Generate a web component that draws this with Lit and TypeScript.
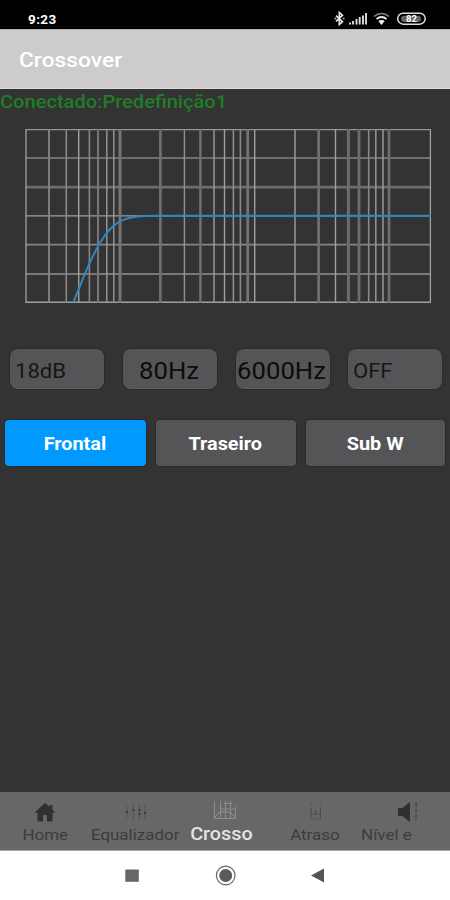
import { LitElement, html, svg, css } from "lit";
import { customElement, state } from "lit/decorators.js";

const VERTICALS: [number, number, string][] = [
  [26, 1.3, "#a0a0a0"], [49, 1.8, "#868686"], [66.3, 1.6, "#888888"], [78.7, 1.4, "#a0a0a0"],
  [89.4, 1.6, "#888888"], [98, 2.1, "#767676"], [106.8, 1.4, "#9a9a9a"], [113.8, 1.4, "#989898"],
  [120, 3, "#757575"], [160.4, 2.7, "#707070"], [184.4, 1.4, "#929292"], [200.4, 2.5, "#707070"],
  [214, 1.4, "#a0a0a0"], [224.5, 1.4, "#a0a0a0"], [233.4, 1.5, "#929292"], [240.4, 1.6, "#8a8a8a"],
  [247.7, 2.8, "#737373"], [254.7, 1.4, "#a0a0a0"], [295, 1.5, "#989898"], [318.6, 2.8, "#6e6e6e"],
  [335.5, 1.4, "#a0a0a0"], [348.4, 3, "#6c6c6c"], [359, 2.8, "#6c6c6c"], [368.7, 1.6, "#888888"],
  [375.8, 1.6, "#909090"], [383, 1.4, "#a0a0a0"], [389, 2.8, "#6e6e6e"], [430.4, 1.3, "#a0a0a0"],
];
const HORIZONTALS: [number, number, string][] = [
  [129.3, 1.3, "#959595"], [157.6, 1.6, "#858585"], [186.8, 2.7, "#6d6d6d"], [215.5, 1.3, "#a0a0a0"],
  [244.2, 1.8, "#858585"], [273.6, 1.5, "#929292"], [301.8, 1.4, "#a0a0a0"],
];

const bluetooth = svg`<path d="M1.5 4.2 8 10.3 4.8 13V1L8 3.7 1.5 9.8" fill="none" stroke="#e8e8e8" stroke-width="1.6"/><path d="M0 7h1.6M8.4 7H10" stroke="#ccc" stroke-width="1.4"/>`;

@customElement("app-root")
export class AppRoot extends LitElement {
  @state() private band = "Frontal";

  static styles = css`
    :host { display: flex; flex-direction: column; width: 450px; height: 900px; background: #333; font-family: Roboto, sans-serif; overflow: hidden; }
    svg { display: block; }
    .status { height: 28.6px; flex: none; background: #000; display: flex; justify-content: space-between; padding: 0 24px 0 28px; box-sizing: border-box; color: #fff; }
    .time { font-size: 13.5px; font-weight: 700; line-height: 38px; letter-spacing: .4px; }
    .title { height: 60px; flex: none; box-sizing: border-box; background: #cdcbcb; border-top: 1px solid #b5b5b5; border-bottom: 1px solid #dadada; padding-left: 19px; color: #fff; font-size: 21px; font-weight: 500; line-height: 61px; }
    .x { display: inline-block; transform-origin: 0 50%; white-space: nowrap; }
    .c { transform-origin: 50% 50%; }
    .title .x { transform: scaleX(1.085); }
    .connection { height: 28px; line-height: 27px; color: #1f7e25; font-size: 17.5px; font-weight: 500; flex: none; }
    .connection .x { transform: scaleX(1.147); }
    .chart { height: 200px; flex: none; }
    .fields { display: grid; grid-template-columns: repeat(4, 94px); gap: 18.6px; margin: 32px 0 0 10.4px; flex: none; }
    .field { height: 40px; box-sizing: border-box; border-radius: 8px; background: #555557; box-shadow: 0 0 0 1px #2b2b2b; border-bottom: 1px solid #536266; color: #0c0c0c; font-size: 24px; line-height: 44px; text-align: center; overflow: hidden; display: flex; justify-content: center; padding-right: 1.5px; }
    .field .x { transform: scaleX(1.07); }
    .field.left { justify-content: flex-start; padding-left: 5px; font-size: 21px; color: #161616; }
    .field.left .x { transform: scaleX(1.05); }
    .bands { display: grid; grid-template-columns: 141px 139.5px 139.5px; gap: 10px; margin: 31px 0 0 5px; flex: none; }
    .band { height: 46px; border: 0; padding: 0 1px 0 0; border-radius: 4px; background: #555557; box-shadow: 0 0 0 1px #2b2b2b; color: #fff; font: 700 19px/47px Roboto, sans-serif; }
    .band .x { transform: scaleX(1.045); }
    .band.on { background: #0099ff; }
    .grow { flex: 1; }
    .tabs { height: 59.5px; flex: none; background: #676767; border-bottom: 1px solid #a4a4a4; box-sizing: border-box; display: grid; grid-template-columns: 90px 90px 90px 90px 90px; }
    .tab { display: flex; flex-direction: column; align-items: center; color: #3c3c3c; font-size: 15px; line-height: 20px; white-space: nowrap; }
    .tab .x { transform: scaleX(1.13); }
    .tab svg { margin: 9px 0 2px; }
    .tab.on { color: #e4e4e4; font-size: 18px; font-weight: 500; }
    .tab.on svg { margin: 7px 0 3px; }
    .tab.on .x { transform: scaleX(1.1); margin-right: 8px; }
    .tab:last-child .x { margin-right: 38px; }
    .tab:last-child svg { margin-left: 4px; }
    .keys { height: 49px; flex: none; background: #fff; }
  `;

  private icon(name: string) {
    switch (name) {
      case "Home":
        return html`<svg width="24" height="22"><path d="M12 2 1.5 11.5H4.5V20.5H10V14H14V20.5H19.5V11.5H22.5L19.5 8.7V4H16.5V6Z" fill="#303030"/></svg>`;
      case "Equalizador":
        return html`<svg width="24" height="22"><path d="M4 5V17M10.5 2V20M16.5 2V20M22 3V19" stroke="#555"/><path d="M3 11h2M9.5 9h2M15.5 9h2M15.5 13h2M21 12h2" stroke="#393939" stroke-width="2"/></svg>`;
      case "Crosso":
        return html`<svg width="26" height="22"><path d="M2.5 2V20M8.5 2V20M13.5 2V20M18.5 2V20M23.5 8V20M2 19.5H24M8 10H23M12 4.5H20" stroke="#8d8d8d" fill="none"/><path d="M3 18 8 13H18L23 18" stroke="#959595" fill="none"/></svg>`;
      case "Atraso":
        return html`<svg width="24" height="22"><path d="M8 7V18M17.5 7V18M12.5 9V14M8 13H17.5" stroke="#4c4c4c" fill="none"/><path d="M8 2V6M17.5 2V6M8 2.5H10M15.5 2.5H17.5M8 18H17.5" stroke="#5a5a5a" fill="none"/></svg>`;
      default:
        return html`<svg width="28" height="22"><path d="M5 7H9.5L17 1V21L9.5 15H5Z" fill="#303030"/><path d="M23 2V20" stroke="#444" stroke-width="1.4" stroke-dasharray="4 1.5"/></svg>`;
    }
  }

  render() {
    const tabs = ["Home", "Equalizador", "Crosso", "Atraso", "Nível e"];
    return html`
      <div class="status"><span class="time">9:23</span>
        <svg width="95" height="28" fill="none">
          <g transform="translate(3.5 11.5)">${bluetooth}</g>
          <path d="M19 24.5v-2M22 24.5v-3.5M25.5 24.5v-5.5M28.7 24.5v-7.5M32 24.5v-9M35 24.5v-11.5" stroke="#ddd" stroke-width="1.9"/>
          <path d="M43 16.5Q50.5 10.5 58 16.5" stroke="#888" stroke-width="1.6"/><path d="M45.5 19Q50.5 15 55.5 19" stroke="#eee" stroke-width="1.8"/><path d="M47.3 21Q50.5 18.8 53.7 21L50.5 25Z" fill="#eee"/>
          <rect x="66.7" y="13.2" width="27.5" height="11" rx="5.5" stroke="#ddd" stroke-width="1.5"/><rect x="70" y="15.7" width="20" height="6.2" rx="3" fill="#666"/>
          <text x="75" y="22" font-size="9.5" font-weight="700" fill="#fff">82</text>
        </svg>
      </div>
      <div class="title"><span class="x">Crossover</span></div>
      <div class="connection"><span class="x">Conectado:Predefinição1</span></div>
      <svg class="chart" width="450" height="200" viewBox="0 116.6 450 200">
        ${HORIZONTALS.map(([y, w, c]) => svg`<path d="M25.5 ${y}H431" stroke=${c} stroke-width=${w}/>`)}
        ${VERTICALS.map(([x, w, c]) => svg`<path d="M${x} 128.7V302.4" stroke=${c} stroke-width=${w}/>`)}
        <path d="M73.5 301.8C79 288 84 275 89.3 263.5C92 257.5 95 251 98 246C101 241 104 236 106.7 232.8C109 229.6 111 227.7 113.7 225.5C116 223.3 118 222 120.5 220.8C126 217.8 131 216.8 138 216C143 215.4 150 215.3 156 215.3H431" fill="none" stroke="#2f86c2" stroke-width="2"/>
      </svg>
      <div class="fields">
        <div class="field left"><span class="x">18dB</span></div>
        <div class="field"><span class="x c">80Hz</span></div>
        <div class="field"><span class="x c">6000Hz</span></div>
        <div class="field left"><span class="x">OFF</span></div>
      </div>
      <div class="bands">
        ${["Frontal", "Traseiro", "Sub W"].map((b) => html`<button class="band ${b === this.band ? "on" : ""}" @click=${() => (this.band = b)}><span class="x c">${b}</span></button>`)}
      </div>
      <div class="grow"></div>
      <div class="tabs">
        ${tabs.map((t) => html`<div class="tab ${t === "Crosso" ? "on" : ""}">${this.icon(t)}<span class="x c">${t}</span></div>`)}
      </div>
      <svg class="keys" width="450" height="49" viewBox="0 851 450 49">
        <path d="M125.3 869.5h13.5v12.3h-13.5z" fill="#666"/>
        <circle cx="225.7" cy="875.5" r="9.3" fill="none" stroke="#666" stroke-width="1.2"/><circle cx="225.7" cy="875.5" r="6.5" fill="#5a5a5a"/>
        <path d="M311 875.5 324 868.5V882.5Z" fill="#555"/>
      </svg>`;
  }
}
